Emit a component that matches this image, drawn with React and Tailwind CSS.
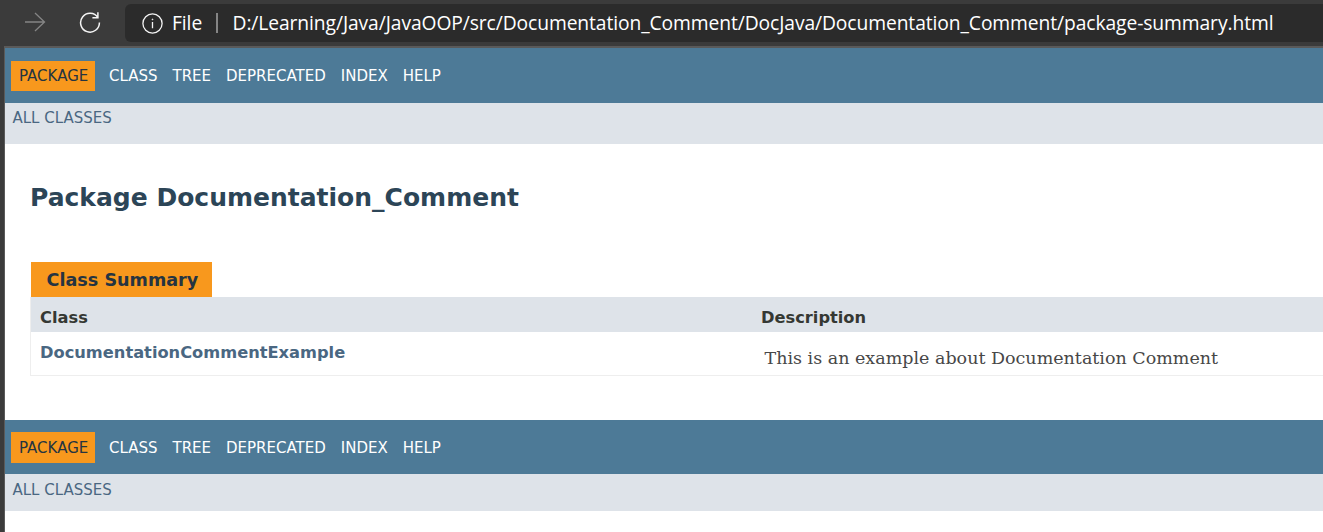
const NAV_ITEMS = ["CLASS", "TREE", "DEPRECATED", "INDEX", "HELP"];

function BrowserBar() {
  return (
    <header className="flex h-[46px] shrink-0 items-start bg-[#3b3b3b] pt-1 font-['Open_Sans',sans-serif] text-white">
      <svg className="mt-[7px] ml-6 h-[22px] w-[22px] shrink-0" viewBox="0 0 22 22" fill="none" stroke="#858585" strokeWidth="1.3">
        <path d="M1 11H20.5M11 2L20.5 11L11 20" />
      </svg>
      <svg className="mt-[7px] ml-[33px] h-[24px] w-[22px] shrink-0" viewBox="0 0 22 24" fill="none" stroke="#f4f4f4" strokeWidth="1.5">
        <path d="M18.9 6.6A9.4 9.4 0 1 0 20.4 11.5M18.9 1.2V6.8H13.4" />
      </svg>
      <div className="ml-6 flex h-[38px] min-w-0 flex-1 items-center overflow-hidden rounded-l-md bg-[#2b2b2b] text-[19.25px] tracking-[-0.09px] whitespace-nowrap">
        <svg className="ml-[17px] h-[21px] w-[21px] shrink-0" viewBox="0 0 21 21" fill="none" stroke="#f4f4f4" strokeWidth="1.3">
          <circle cx="10.5" cy="10.5" r="9.6" />
          <path d="M10.5 9V15.2" />
          <circle cx="10.5" cy="6.4" r="0.5" fill="#f4f4f4" stroke="#f4f4f4" strokeWidth="0.7" />
        </svg>
        <span className="ml-[9px] w-[44px]">File</span>
        <span className="h-5 w-[2px] shrink-0 bg-[#858585]" />
        <span className="ml-[14.5px]">D:/Learning/Java/JavaOOP/src/Documentation_Comment/DocJava/Documentation_Comment/package-summary.html</span>
      </div>
    </header>
  );
}

function NavBar({ bottom = false }) {
  return (
    <nav className="shrink-0 text-[15px] leading-[17px]">
      <div className={`flex items-start bg-[#4d7a97] pl-[6px] text-white ${bottom ? "h-[54px] pt-3" : "h-[55px] pt-[13px]"}`}>
        <span className={`w-[84px] bg-[#f8981d] pl-2 text-[#253441] ${bottom ? "h-[31px] pt-[8px]" : "h-[30px] pt-[7px]"}`}>PACKAGE</span>
        <ul className={`ml-[14px] flex gap-[15px] ${bottom ? "pt-[8px]" : "pt-[7px]"}`}>
          {NAV_ITEMS.map((item) => (
            <li key={item}>{item}</li>
          ))}
        </ul>
      </div>
      <div className={`bg-[#dee3e9] pl-[7.5px] text-[#4a6782] ${bottom ? "h-[37px] pt-[8px]" : "h-[41px] pt-[7px]"}`}>ALL CLASSES</div>
    </nav>
  );
}

function ClassSummary() {
  return (
    <section className="mt-[48px] ml-[25px]">
      <h2 className="ml-px flex h-[35px] w-[181px] items-center bg-[#f8981d] pt-[2px] pl-[15.5px] text-[17.6px] font-bold text-[#253441]">
        Class Summary
      </h2>
      <div className="border-b border-l border-[#eeeeee]">
        <div className="grid h-[35px] grid-cols-[721px_1fr] bg-[#dee3e9] pt-[11px] pl-[9px] text-[16.25px] leading-5 font-bold text-[#353833]">
          <span>Class</span>
          <span>Description</span>
        </div>
        <div className="grid h-[43px] grid-cols-[721px_1fr] pl-[9px] leading-5">
          <span className="pt-[11px] text-[16.25px] font-bold text-[#4a6782]">DocumentationCommentExample</span>
          <span className="pt-[16px] pl-[3.5px] font-['DejaVu_Serif',serif] text-[17.5px] text-[#474747]">This is an example about Documentation Comment</span>
        </div>
      </div>
    </section>
  );
}

export default function App() {
  return (
    <div className="flex h-[532px] w-[1323px] flex-col overflow-hidden bg-[#3b3b3b] font-['DejaVu_Sans',sans-serif]">
      <BrowserBar />
      <div className="ml-1 flex flex-1 flex-col border-t-2 border-l border-[#5a5a5a] bg-white">
        <NavBar />
        <main className="h-[276px] shrink-0 pt-[38px]">
          <h1 className="pl-[25px] text-[25px] leading-8 font-bold text-[#2c4557]">Package Documentation_Comment</h1>
          <ClassSummary />
        </main>
        <NavBar bottom />
      </div>
    </div>
  );
}
